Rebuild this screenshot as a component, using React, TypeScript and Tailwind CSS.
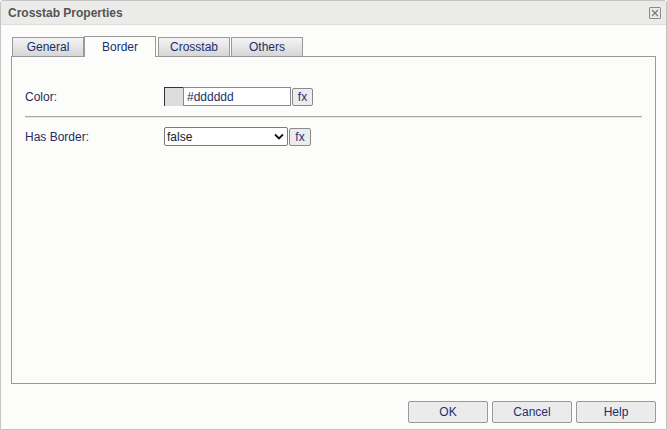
import React from "react";

const font = { fontFamily: "'Liberation Sans', Arial, sans-serif" };

function Tab({ label, active, w }: { label: string; active?: boolean; w: string }) {
  if (active) {
    return (
      <div
        className={`${w} h-[21px] -mb-px flex items-center justify-center border border-[#9a9a9a] border-b-0 bg-[#fcfdfb] text-[12px] text-[#1b2f6b] relative z-10`}
      >
        {label}
      </div>
    );
  }
  return (
    <div
      className={`${w} h-[19px] mt-[2px] flex items-center justify-center border border-[#9a9a9a] border-b-0 bg-gradient-to-b from-[#f4f4f4] to-[#d6d6d6] text-[12px] text-[#1b2f6b]`}
    >
      {label}
    </div>
  );
}

function Fx({ w = "w-[21px]" }: { w?: string }) {
  return (
    <div
      className={`${w} h-[18px] flex items-center justify-center border border-[#8a8a8a] rounded-[2px] bg-[#ececec] text-[12px] text-[#3a2a6b]`}
    >
      fx
    </div>
  );
}

function Btn({ label }: { label: string }) {
  return (
    <div className="w-[80px] h-[22px] flex items-center justify-center border border-[#9a9a9a] rounded-[2px] bg-[#ebebeb] text-[12px] text-[#1b2f6b]">
      {label}
    </div>
  );
}

export default function App() {
  return (
    <div style={font} className="w-[667px] h-[430px] bg-white">
      <div className="w-[667px] h-[430px] border border-[#c4c4c4] rounded-t-[3px] bg-[#fcfdfb] flex flex-col">
        <div className="h-[24px] bg-[#ebece9] border-b border-[#dcdcdc] flex items-center justify-between pl-[7px] pr-[5px]">
          <span className="text-[12px] font-bold text-[#555555]">Crosstab Properties</span>
          <div className="w-[12px] h-[12px] border border-[#8a8a8a] rounded-[1px] flex items-center justify-center">
            <svg width="8" height="8" viewBox="0 0 8 8">
              <path d="M1 1 L7 7 M7 1 L1 7" stroke="#777" strokeWidth="1.2" />
            </svg>
          </div>
        </div>
        <div className="flex-1 flex flex-col pl-[10px] pr-[10px] pt-[10px]">
          <div className="flex items-end pl-[1px] h-[21px]">
            <Tab label="General" w="w-[72px]" />
            <Tab label="Border" active w="w-[72px]" />
            <div className="w-[2px]" />
            <Tab label="Crosstab" w="w-[72px]" />
            <div className="w-[1px]" />
            <Tab label="Others" w="w-[72px]" />
          </div>
          <div className="h-[328px] border border-[#9a9a9a] bg-[#fcfdfb] pl-[13px] pr-[13px] pt-[30px]">
            <div className="flex items-center h-[19px]">
              <span className="w-[139px] text-[12px] text-[#2a2a5e]">Color:</span>
              <div className="w-[19px] h-[19px] bg-[#dddddd] border-l border-t border-[#333]" />
              <div className="w-[108px] h-[19px] border border-[#8a8a8a] bg-white flex items-center pl-[3px] text-[12px] text-[#1b2f6b]">
                #dddddd
              </div>
              <div className="w-[1px]" />
              <Fx />
            </div>
            <div className="mt-[10px] h-[2px] border-t border-[#a8a8a8] border-b border-b-[#e6e6e6]" />
            <div className="flex items-center h-[19px] mt-[9px]">
              <span className="w-[139px] text-[12px] text-[#2a2a5e]">Has Border:</span>
              <div className="w-[124px] h-[19px] border border-[#7a7a7a] rounded-[2px] bg-white flex items-center justify-between pl-[2px] pr-[3px] text-[12px] text-[#222]">
                <span>false</span>
                <svg width="10" height="7" viewBox="0 0 10 7">
                  <path d="M1 1.5 L5 5.5 L9 1.5" stroke="#111" strokeWidth="1.8" fill="none" />
                </svg>
              </div>
              <div className="w-[1px]" />
              <Fx w="w-[22px]" />
            </div>
          </div>
          <div className="flex justify-end gap-[4px] mt-[17px] pr-0">
            <Btn label="OK" />
            <Btn label="Cancel" />
            <Btn label="Help" />
          </div>
        </div>
      </div>
    </div>
  );
}
